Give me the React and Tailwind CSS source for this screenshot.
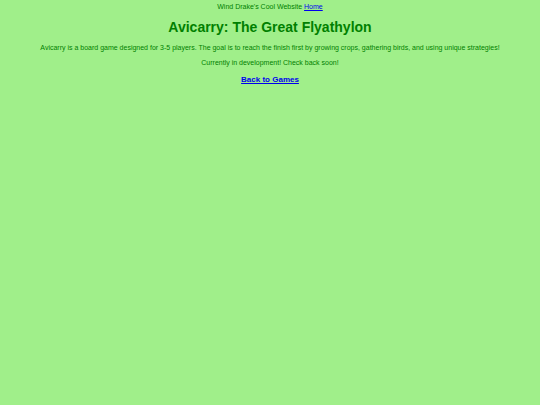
const App = () => {
  return (
    <div className="min-h-screen bg-[#a0ef8a] pt-[3px] text-center font-['Liberation_Sans',Arial,sans-serif] text-[#008000]">
      <header className="text-[7px] leading-[8px]">
        Wind Drake's Cool Website{' '}
        <a href="#home" className="text-[#0000ee] underline">
          Home
        </a>
      </header>
      <main>
        <h1 className="mt-2 text-[14px] leading-4 font-bold">
          Avicarry: The Great Flyathylon
        </h1>
        <p className="mt-[9px] text-[7px] leading-[8px]">
          Avicarry is a board game designed for 3-5 players. The goal is to
          reach the finish first by growing crops, gathering birds, and using
          unique strategies!
        </p>
        <p className="mt-[7px] text-[7px] leading-[8px]">
          Currently in development! Check back soon!
        </p>
        <h2 className="mt-2 text-[8px] leading-[10px] font-bold">
          <a href="#games" className="text-[#0000ee] underline">
            Back to Games
          </a>
        </h2>
      </main>
    </div>
  );
};

export default App;
